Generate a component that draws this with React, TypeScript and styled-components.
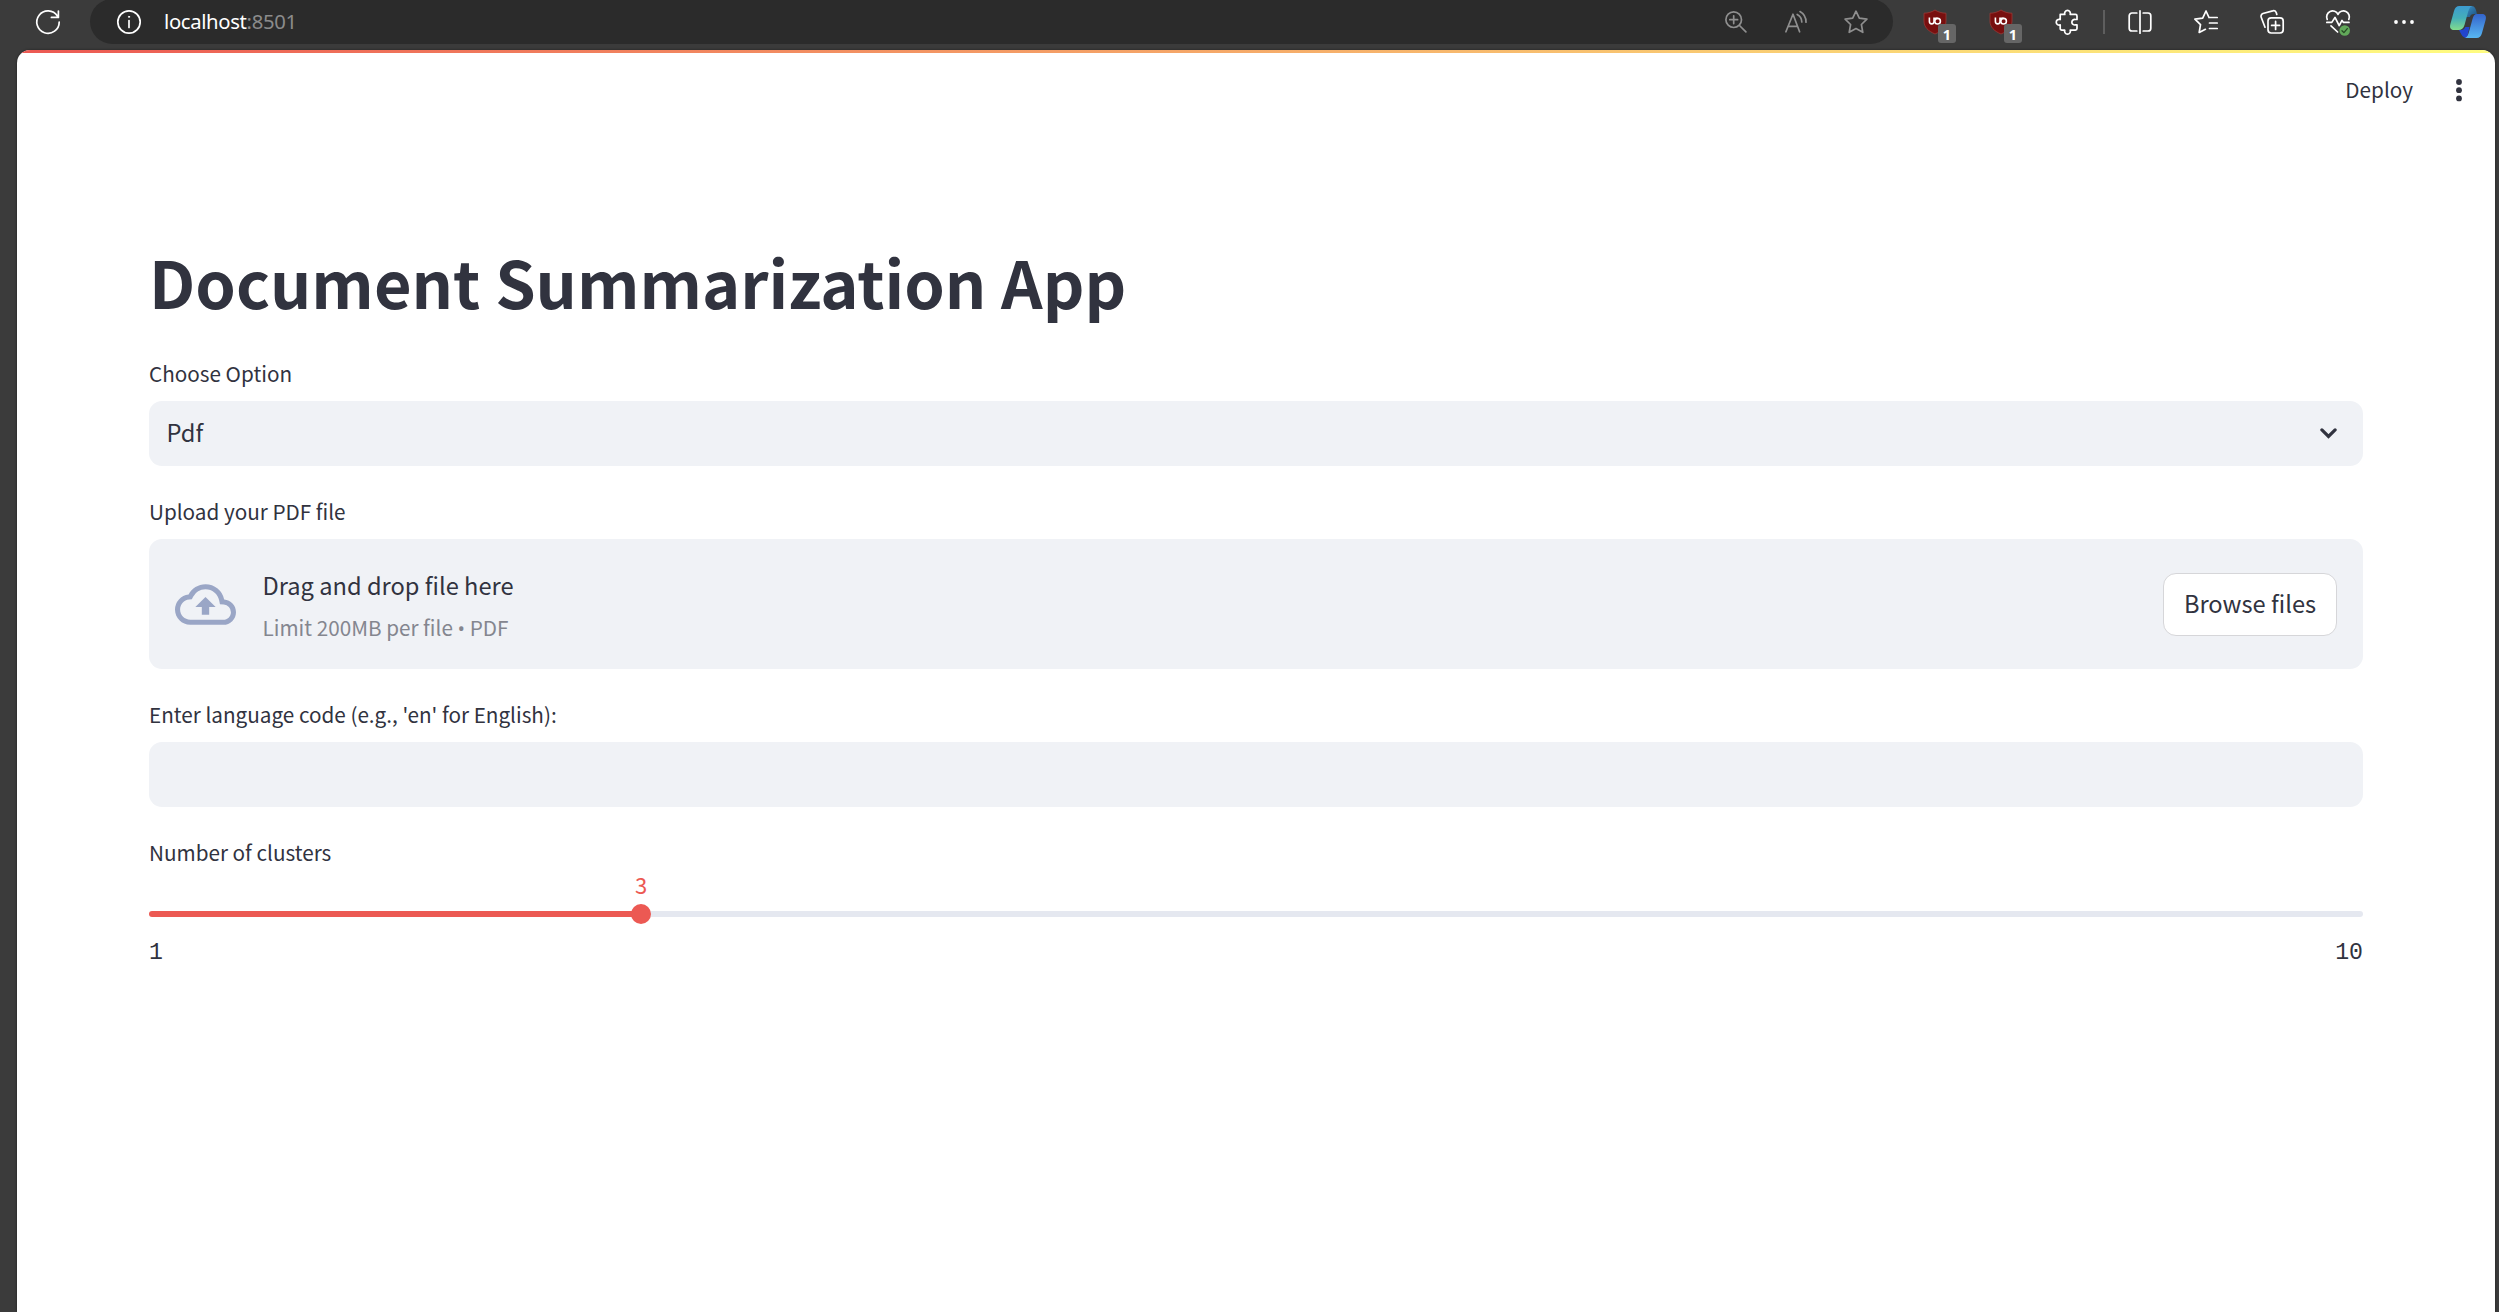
import React from "react";
import styled, { createGlobalStyle } from "styled-components";

const GlobalStyle = createGlobalStyle`
  * { box-sizing: border-box; }
  body { margin: 0; background: #3b3b3b; overflow: hidden; }
`;

const sans = `"Noto Sans CJK SC", "Noto Sans", sans-serif`;
const mono = `"Liberation Mono", monospace`;
const ink = "#31333f";
const fieldBg = "#f0f2f6";
const red = "#ec5953";

const Window = styled.div`
  display: flex;
  flex-direction: column;
  width: 2499px;
  height: 1312px;
  background: #3b3b3b;
  overflow: hidden;
`;

const Toolbar = styled.header`
  display: flex;
  align-items: flex-start;
  height: 50px;
  flex: none;
`;

const Slot = styled.div<{ $w: number; $pad?: number }>`
  display: flex;
  align-items: center;
  justify-content: center;
  width: ${(p) => p.$w}px;
  height: 43px;
  padding-left: ${(p) => p.$pad ?? 0}px;
  flex: none;
  svg { display: block; overflow: visible; }
`;

const AddressBar = styled.div`
  display: flex;
  align-items: center;
  width: 1803px;
  height: 45px;
  margin-top: -1px;
  padding-right: 7px;
  border-radius: 23px;
  background: #2b2b2b;
  flex: none;
`;

const Url = styled.span`
  flex: 1;
  padding: 0 0 1px 12px;
  font: 400 20.3px/30px "Noto Sans", sans-serif;
  letter-spacing: -0.35px;
  color: #fff;
`;

const Port = styled.span`
  color: #8b8b8b;
`;

const Divider = styled.div`
  width: 2px;
  height: 24px;
  margin: 10px 2px 0 3px;
  background: #5e5e5e;
`;

const Extensions = styled.div`
  display: flex;
  margin-left: 9px;
`;

const Extension = styled.div`
  position: relative;
  display: flex;
`;

const Badge = styled.span`
  position: absolute;
  left: 36px;
  top: 24px;
  width: 18px;
  height: 19px;
  border-radius: 3px;
  background: #666;
  color: #fff;
  text-align: center;
  font: 700 14.5px/20px "Noto Sans", sans-serif;
`;

const Page = styled.main`
  display: flex;
  flex-direction: column;
  flex: 1;
  margin: 0 4px 0 17px;
  border-radius: 13px 13px 0 0;
  background: #fff;
  overflow: hidden;
  font-family: ${sans};
  color: ${ink};
  box-shadow: 0 0 3px rgba(0, 0, 0, 0.45);
`;

const Decoration = styled.div`
  height: 3px;
  flex: none;
  background: linear-gradient(90deg, #ec5953, #fffd80);
`;

const AppHeader = styled.div`
  display: flex;
  justify-content: flex-end;
  align-items: center;
  height: 73px;
  padding-right: 33px;
  gap: 43px;
`;

const Deploy = styled.button`
  border: 0;
  padding: 0 0 1px;
  background: none;
  color: ${ink};
  font: 400 20.7px/30px ${sans};
`;

const Content = styled.section`
  display: flex;
  flex-direction: column;
  padding: 113px 132px 0;
`;

const Title = styled.h1`
  margin: 0 0 33px;
  height: 84px;
  font-size: 64.85px;
  line-height: 84px;
  font-weight: 700;
`;

const Field = styled.div`
  display: flex;
  flex-direction: column;
  margin-bottom: 28px;
`;

const Label = styled.label`
  height: 35px;
  margin-bottom: 10px;
  font-size: 20.7px;
  line-height: 35px;
`;

const Control = styled.div`
  display: flex;
  align-items: center;
  justify-content: space-between;
  height: 65px;
  padding: 0 26px 0 17.5px;
  border-radius: 13px;
  background: ${fieldBg};
  font-size: 23.65px;
`;

const ControlValue = styled.span`
  line-height: 34px;
  padding-bottom: 3px;
`;

const Dropzone = styled.div`
  display: flex;
  align-items: center;
  height: 130px;
  padding: 0 26px;
  border-radius: 13px;
  background: ${fieldBg};
`;

const DropText = styled.div`
  display: flex;
  flex-direction: column;
  flex: 1;
  padding: 4px 0 0 26.5px;
`;

const DropTitle = styled.span`
  font-size: 23.65px;
  line-height: 42px;
`;

const DropHint = styled.span`
  font-size: 20.7px;
  line-height: 42px;
  color: #84868f;
`;

const Bullet = styled.span`
  font-family: "Open Sans", sans-serif;
  font-size: 20px;
  line-height: 20px;
`;

const Browse = styled.button`
  width: 174px;
  height: 63px;
  padding: 0 0 2px;
  border: 1px solid #d6d6d9;
  border-radius: 13px;
  background: #fff;
  color: ${ink};
  font: 400 23.65px/40px ${sans};
  white-space: nowrap;
`;

const Slider = styled.div`
  display: flex;
  flex-direction: column;
`;

const Track = styled.div<{ $fill: number }>`
  position: relative;
  height: 6px;
  margin-top: 31px;
  border-radius: 3px;
  background: linear-gradient(
    90deg,
    ${red} ${(p) => p.$fill}%,
    #e5e8f0 ${(p) => p.$fill}%
  );
`;

const Thumb = styled.div<{ $at: number }>`
  position: absolute;
  left: ${(p) => p.$at}%;
  top: -7px;
  width: 20px;
  height: 20px;
  margin-left: -10px;
  border-radius: 50%;
  background: ${red};
`;

const ThumbValue = styled.span`
  position: absolute;
  left: 0;
  bottom: 25px;
  width: 20px;
  text-align: center;
  color: ${red};
  font: 400 22px/30px ${sans};
`;

const Ticks = styled.div`
  display: flex;
  justify-content: space-between;
  margin-top: 21px;
  font: 400 23.2px/30px ${mono};
`;

const white = { fill: "none", stroke: "#fff", strokeWidth: 1.7, strokeLinecap: "round", strokeLinejoin: "round" } as const;
const grey = { ...white, stroke: "#8f8f8f" } as const;

const Reload = () => (
  <svg width="24" height="24" viewBox="0 0 24 24" {...white}>
    <path d="M21.4 6A11.2 11.2 0 1 0 23.2 12M22.4 1v6.4h-7" />
  </svg>
);

const Info = () => (
  <svg width="24" height="24" viewBox="0 0 24 24" {...white}>
    <circle cx="12" cy="12" r="11.2" />
    <path d="M12 10.5v7" />
    <circle cx="12" cy="6.8" r=".6" fill="#fff" strokeWidth="1" />
  </svg>
);

const ZoomIn = () => (
  <svg width="22" height="22" viewBox="0 0 22 22" {...grey}>
    <circle cx="8.7" cy="8.7" r="7.8" />
    <path d="M14.5 14.5l6.4 6.4M8.7 4.8v7.8M4.8 8.7h7.8" />
  </svg>
);

const ReadAloud = () => (
  <svg width="22" height="22" viewBox="0 0 22 22" {...grey}>
    <path d="M.9 20.8L8 3.2l6.6 17.6M3.2 15.3h9.4M12.2 3.4a8.6 8.6 0 0 1 4.6 7.6M15 .6a12 12 0 0 1 6 10.6" />
  </svg>
);

const Star = () => (
  <svg width="24" height="24" viewBox="0 0 24 24" {...grey}>
    <path d="M12 1.2l3.3 6.9 7.6 1.1-5.5 5.3 1.4 7.8-6.8-3.7-6.8 3.7 1.4-7.8L1.1 9.2l7.6-1.1z" />
  </svg>
);

const Shield = () => (
  <svg width="22" height="24" viewBox="0 0 22 24">
    <path d="M11 0C8 2 4 3.2 0 3.2V11c0 6 4 10 11 13 7-3 11-7 11-13V3.2C18 3.2 14 2 11 0z" fill="#780f0f" stroke="#9b3a36" strokeWidth=".8" />
    <path d="M5.4 7.6v4a2.3 2.3 0 0 0 4.6 0V8.400h3.6" fill="none" stroke="#fff" strokeWidth="1.6" />
    <circle cx="13.6" cy="11.2" r="2.8" fill="none" stroke="#fff" strokeWidth="1.6" />
  </svg>
);

const Puzzle = () => (
  <svg width="22" height="24" viewBox="0 0 22 24" {...white}>
    <path d="M4.2 4.4h4.6a2.9 2.9 0 1 1 5.4 0h5.2a1.6 1.6 0 0 1 1.6 1.6v3.5h-1.6a2.8 2.8 0 1 0 0 5.4H21v3.7a1.6 1.6 0 0 1-1.6 1.6h-5.2a2.9 2.9 0 1 1-5.4 0H5.8a1.6 1.6 0 0 1-1.6-1.6v-3.7a2.9 2.9 0 1 1 0-5.4z" />
  </svg>
);

const Split = () => (
  <svg width="24" height="24" viewBox="0 0 24 24" {...white}>
    <path d="M12 .8v22.4M8.8 3H4a2.8 2.8 0 0 0-2.8 2.8v12.4A2.8 2.8 0 0 0 4 21h4.8M15.2 3H20a2.8 2.8 0 0 1 2.8 2.8v12.4A2.8 2.8 0 0 1 20 21h-4.8" />
  </svg>
);

const Favorites = () => (
  <svg width="24" height="24" viewBox="0 0 24 24" {...white}>
    <path d="M15 7.5L12 1 8.7 8.1.9 9.2l5.6 5.5-1.3 7.8 6.2-3.2M15.5 7.5h7.7M15.5 13h7.7M15.5 18.5h7.7" />
  </svg>
);

const Collections = () => (
  <svg width="24" height="24" viewBox="0 0 24 24" {...white}>
    <rect x="8" y="7.8" width="15.2" height="15.2" rx="3.2" />
    <path d="M15.6 11.4v8M11.6 15.4h8M5 17.2L1.2 7.3A2.9 2.9 0 0 1 2.9 3.5L12.7.9a2.9 2.9 0 0 1 3.6 1.9l.5 1.7" />
  </svg>
);

const Essentials = () => (
  <svg width="24" height="24" viewBox="0 0 24 24" {...white}>
    <path d="M1.2 9.4A5.8 5.8 0 0 1 12 4.4a5.8 5.8 0 0 1 10.8 5M.8 12.4h5l3.2-5 4.2 8.2 2.8-5.2 1.5 2h5.5M5 15.8l6.6 6.2" />
    <circle cx="18.7" cy="20.5" r="5.3" fill="#62a95a" stroke="none" />
    <path d="M16 20.7l1.9 1.9 3.4-4" stroke="#274a25" strokeWidth="1.3" />
  </svg>
);

const More = () => (
  <svg width="20" height="4" viewBox="0 0 20 4" fill="#fff">
    <circle cx="2" cy="2" r="1.9" />
    <circle cx="10" cy="2" r="1.9" />
    <circle cx="18" cy="2" r="1.9" />
  </svg>
);

const Copilot = () => (
  <svg width="36" height="32" viewBox="0 0 36 32">
    <defs>
      <linearGradient id="cpA" x1="0" y1="0" x2="0" y2="1">
        <stop offset="0" stopColor="#3d9bd0" />
        <stop offset=".5" stopColor="#44afb9" />
        <stop offset="1" stopColor="#83dc8c" />
      </linearGradient>
      <linearGradient id="cpB" x1="0" y1="0" x2="0" y2="1">
        <stop offset="0" stopColor="#3464cc" />
        <stop offset="1" stopColor="#58b7f2" />
      </linearGradient>
      <linearGradient id="cpC" x1="0" y1="0" x2="1" y2="1">
        <stop offset="0" stopColor="#3b90c6" />
        <stop offset="1" stopColor="#1c4f7d" />
      </linearGradient>
    </defs>
    <path d="M17 0h4.5c3.5 0 4.500 3 5.500 8h-3c-2.500 0-3.500 1-4.200 3H16z" fill="url(#cpC)" />
    <path d="M9 24h2c2.500 0 3.500-1 4.300-3h4.200L17 32c-4 0-5.500-3-8-8z" fill="#2245ce" />
    <path d="M9.5 0H22c-2.500 1-3.500 4-4.500 8l-3 11c-1 3.400-3 5-6 5H4c-3.500 0-4.600-2.500-3.600-6L4 5c1-3.500 2.500-5 5.500-5z" fill="url(#cpA)" />
    <path d="M27 8h5c3.500 0 4.600 2.500 3.600 6L32 27c-1 3.500-2.500 5-5.500 5H15c2.500-1 3.500-4 4.500-8l3-11c1-3.400 2-5 4.500-5z" fill="url(#cpB)" />
  </svg>
);

const Kebab = () => (
  <svg width="6" height="24" viewBox="0 0 6 24" fill={ink}>
    <circle cx="3" cy="4" r="2.9" />
    <circle cx="3" cy="12.2" r="2.9" />
    <circle cx="3" cy="20.4" r="2.9" />
  </svg>
);

const Chevron = () => (
  <svg width="17" height="11" viewBox="0 0 17 11" fill="none" stroke={ink} strokeWidth="3.2" strokeLinecap="round">
    <path d="M1.9 1.9l6.6 6.5 6.600-6.500" />
  </svg>
);

const Cloud = () => (
  <svg width="61" height="61" viewBox="0 0 24 24" fill="#9aa6c6">
    <path d="M19.35 10.04A7.49 7.49 0 0 0 12 4C9.11 4 6.6 5.64 5.35 8.04A5.994 5.994 0 0 0 0 14c0 3.31 2.69 6 6 6h13c2.76 0 5-2.24 5-5 0-2.64-2.05-4.78-4.65-4.96zM19 18H6c-2.21 0-4-1.79-4-4 0-2.05 1.53-3.76 3.56-3.97l1.07-.11.5-.95A5.469 5.469 0 0 1 12 6c2.62 0 4.88 1.86 5.39 4.43l.3 1.5 1.53.11A2.98 2.98 0 0 1 22 15c0 1.65-1.35 3-3 3zM8 13h2.55v3h2.9v-3H16l-4-4z" />
  </svg>
);

export default function App() {
  const min = 1;
  const max = 10;
  const value = 3;
  const percent = ((value - min) / (max - min)) * 100;

  return (
    <>
      <GlobalStyle />
      <Window>
        <Toolbar>
          <Slot $w={90} $pad={6}><Reload /></Slot>
          <AddressBar>
            <Slot $w={62} $pad={16}><Info /></Slot>
            <Url>localhost<Port>:8501</Port></Url>
            <Slot $w={60}><ZoomIn /></Slot>
            <Slot $w={60}><ReadAloud /></Slot>
            <Slot $w={60}><Star /></Slot>
          </AddressBar>
          <Extensions>
            <Extension><Slot $w={66}><Shield /></Slot><Badge>1</Badge></Extension>
            <Extension><Slot $w={66}><Shield /></Slot><Badge>1</Badge></Extension>
            <Slot $w={66}><Puzzle /></Slot>
          </Extensions>
          <Divider />
          <Slot $w={66}><Split /></Slot>
          <Slot $w={66}><Favorites /></Slot>
          <Slot $w={66}><Collections /></Slot>
          <Slot $w={66}><Essentials /></Slot>
          <Slot $w={66}><More /></Slot>
          <Slot $w={62}><Copilot /></Slot>
        </Toolbar>
        <Page>
          <Decoration />
          <AppHeader>
            <Deploy>Deploy</Deploy>
            <Kebab />
          </AppHeader>
          <Content>
            <Title>Document Summarization App</Title>
            <Field>
              <Label>Choose Option</Label>
              <Control><ControlValue>Pdf</ControlValue><Chevron /></Control>
            </Field>
            <Field>
              <Label>Upload your PDF file</Label>
              <Dropzone>
                <Cloud />
                <DropText>
                  <DropTitle>Drag and drop file here</DropTitle>
                  <DropHint>Limit 200MB per file <Bullet>•</Bullet> PDF</DropHint>
                </DropText>
                <Browse>Browse files</Browse>
              </Dropzone>
            </Field>
            <Field>
              <Label>Enter language code (e.g., 'en' for English):</Label>
              <Control />
            </Field>
            <Field>
              <Label>Number of clusters</Label>
              <Slider>
                <Track $fill={percent}>
                  <Thumb $at={percent}><ThumbValue>{value}</ThumbValue></Thumb>
                </Track>
                <Ticks><span>{min}</span><span>{max}</span></Ticks>
              </Slider>
            </Field>
          </Content>
        </Page>
      </Window>
    </>
  );
}
